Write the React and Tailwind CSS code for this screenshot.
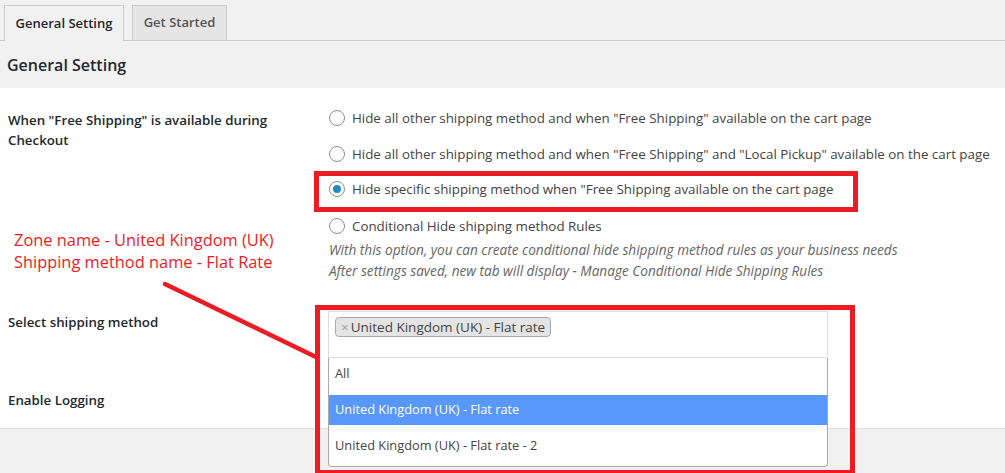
import React from "react";

function Radio({ checked }) {
  return (
    <span className="relative inline-flex h-[16px] w-[16px] shrink-0 items-center justify-center rounded-full border border-[#8c8f94] bg-white">
      {checked && <span className="h-[8px] w-[8px] rounded-full bg-[#1e8cbe]" />}
    </span>
  );
}

function RadioRow({ checked, children, className = "" }) {
  return (
    <div className={"flex h-[20px] items-center gap-[7px] leading-[20px] " + className}>
      <Radio checked={checked} />
      <span className="whitespace-nowrap text-[13.35px] text-[#444]">{children}</span>
    </div>
  );
}

export default function App() {
  return (
    <div
      className="relative h-[473px] w-[1005px] overflow-hidden bg-[#f1f1f1] text-[#23282d]"
      style={{ fontFamily: '"Open Sans", "Noto Sans", sans-serif' }}
    >
      {/* Tabs */}
      <div className="flex h-[41px] items-end gap-[8px] border-b border-[#ccc] pl-[4px]">
        <div className="-mb-px flex h-[36px] w-[120px] items-center justify-center border border-b-0 border-[#ccc] bg-[#f1f1f1] text-[13px] font-semibold text-[#23282d]">
          General Setting
        </div>
        <div className="flex h-[35px] w-[95px] items-center justify-center border border-b-0 border-[#ccc] bg-[#e5e5e5] text-[13px] font-semibold text-[#555]">
          Get Started
        </div>
      </div>

      {/* Heading */}
      <div className="flex h-[47px] items-center pl-[7px] text-[16px] font-semibold text-[#23282d]">
        General Setting
      </div>

      {/* White settings area */}
      <div className="h-[341px] border-b border-[#ddd] bg-white">
        {/* Row 1 */}
        <div className="flex pt-[20px]">
          <div className="w-[329px] shrink-0 pl-[8px] pt-[2px] text-[13.3px] font-semibold leading-[20px] text-[#23282d]">
            When "Free Shipping" is available during
            <br />
            Checkout
          </div>
          <div className="flex flex-col">
            <RadioRow>Hide all other shipping method and when "Free Shipping" available on the cart page</RadioRow>
            <RadioRow className="mt-[16px]">
              Hide all other shipping method and when "Free Shipping" and "Local Pickup" available on the cart page
            </RadioRow>
            <RadioRow checked className="mt-[15px]">
              Hide specific shipping method when "Free Shipping available on the cart page
            </RadioRow>
            <RadioRow className="mt-[17px]">Conditional Hide shipping method Rules</RadioRow>
            <div className="mt-[3px] whitespace-nowrap text-[13.6px] italic leading-[21px] text-[#666]">
              With this option, you can create conditional hide shipping method rules as your business needs
              <br />
              After settings saved, new tab will display - Manage Conditional Hide Shipping Rules
            </div>
          </div>
        </div>

        {/* Row 2 */}
        <div className="mt-[30px] flex">
          <div className="w-[328px] shrink-0 pl-[8px] pt-[1px] text-[13.3px] font-semibold leading-[20px] text-[#23282d]">
            Select shipping method
          </div>
          <div className="relative h-[47px] w-[500px] border border-[#ddd] bg-white">
            <div className="ml-[6px] mt-[5px] inline-flex h-[20px] items-center gap-[2px] rounded-[4px] border border-[#aaa] bg-[#e4e4e4] px-[5px] text-[13.5px] text-[#444]">
              <span className="text-[#999]">×</span>
              <span>United Kingdom (UK) - Flat rate</span>
            </div>
          </div>
        </div>

        {/* Row 3 */}
        <div className="mt-[32px] pl-[8px] text-[13.3px] font-semibold leading-[20px] text-[#23282d]">
          Enable Logging
        </div>
      </div>

      {/* Dropdown menu overlay */}
      <div className="absolute left-[328px] top-[358px] h-[109px] w-[500px] rounded-b-[4px] border border-t-0 border-[#aaa] bg-white pt-[1px] text-[12.8px] text-[#444]">
        <div className="flex h-[30px] items-center px-[6px]">All</div>
        <div className="mt-[6px] flex h-[30px] items-center bg-[#5897fb] px-[6px] text-white">
          United Kingdom (UK) - Flat rate
        </div>
        <div className="mt-[6px] flex h-[30px] items-center px-[6px]">United Kingdom (UK) - Flat rate - 2</div>
      </div>

      {/* Annotations */}
      <div className="absolute left-[314px] top-[171px] h-[41px] w-[544px] border-[5px] border-[#ed1c24]" />
      <div className="absolute left-[315px] top-[305px] h-[170px] w-[540px] border-[5px] border-[#ed1c24]" />
      <div className="absolute left-[14px] top-[229px] text-[16.4px] leading-[22px] text-[#ed1c24]">
        Zone name - United Kingdom (UK)
        <br />
        Shipping method name - Flat Rate
      </div>
      <svg className="absolute left-0 top-0" width="1005" height="473" viewBox="0 0 1005 473">
        <line x1="165" y1="284" x2="316" y2="357" stroke="#ed1c24" strokeWidth="4.5" strokeLinecap="round" />
      </svg>
    </div>
  );
}
